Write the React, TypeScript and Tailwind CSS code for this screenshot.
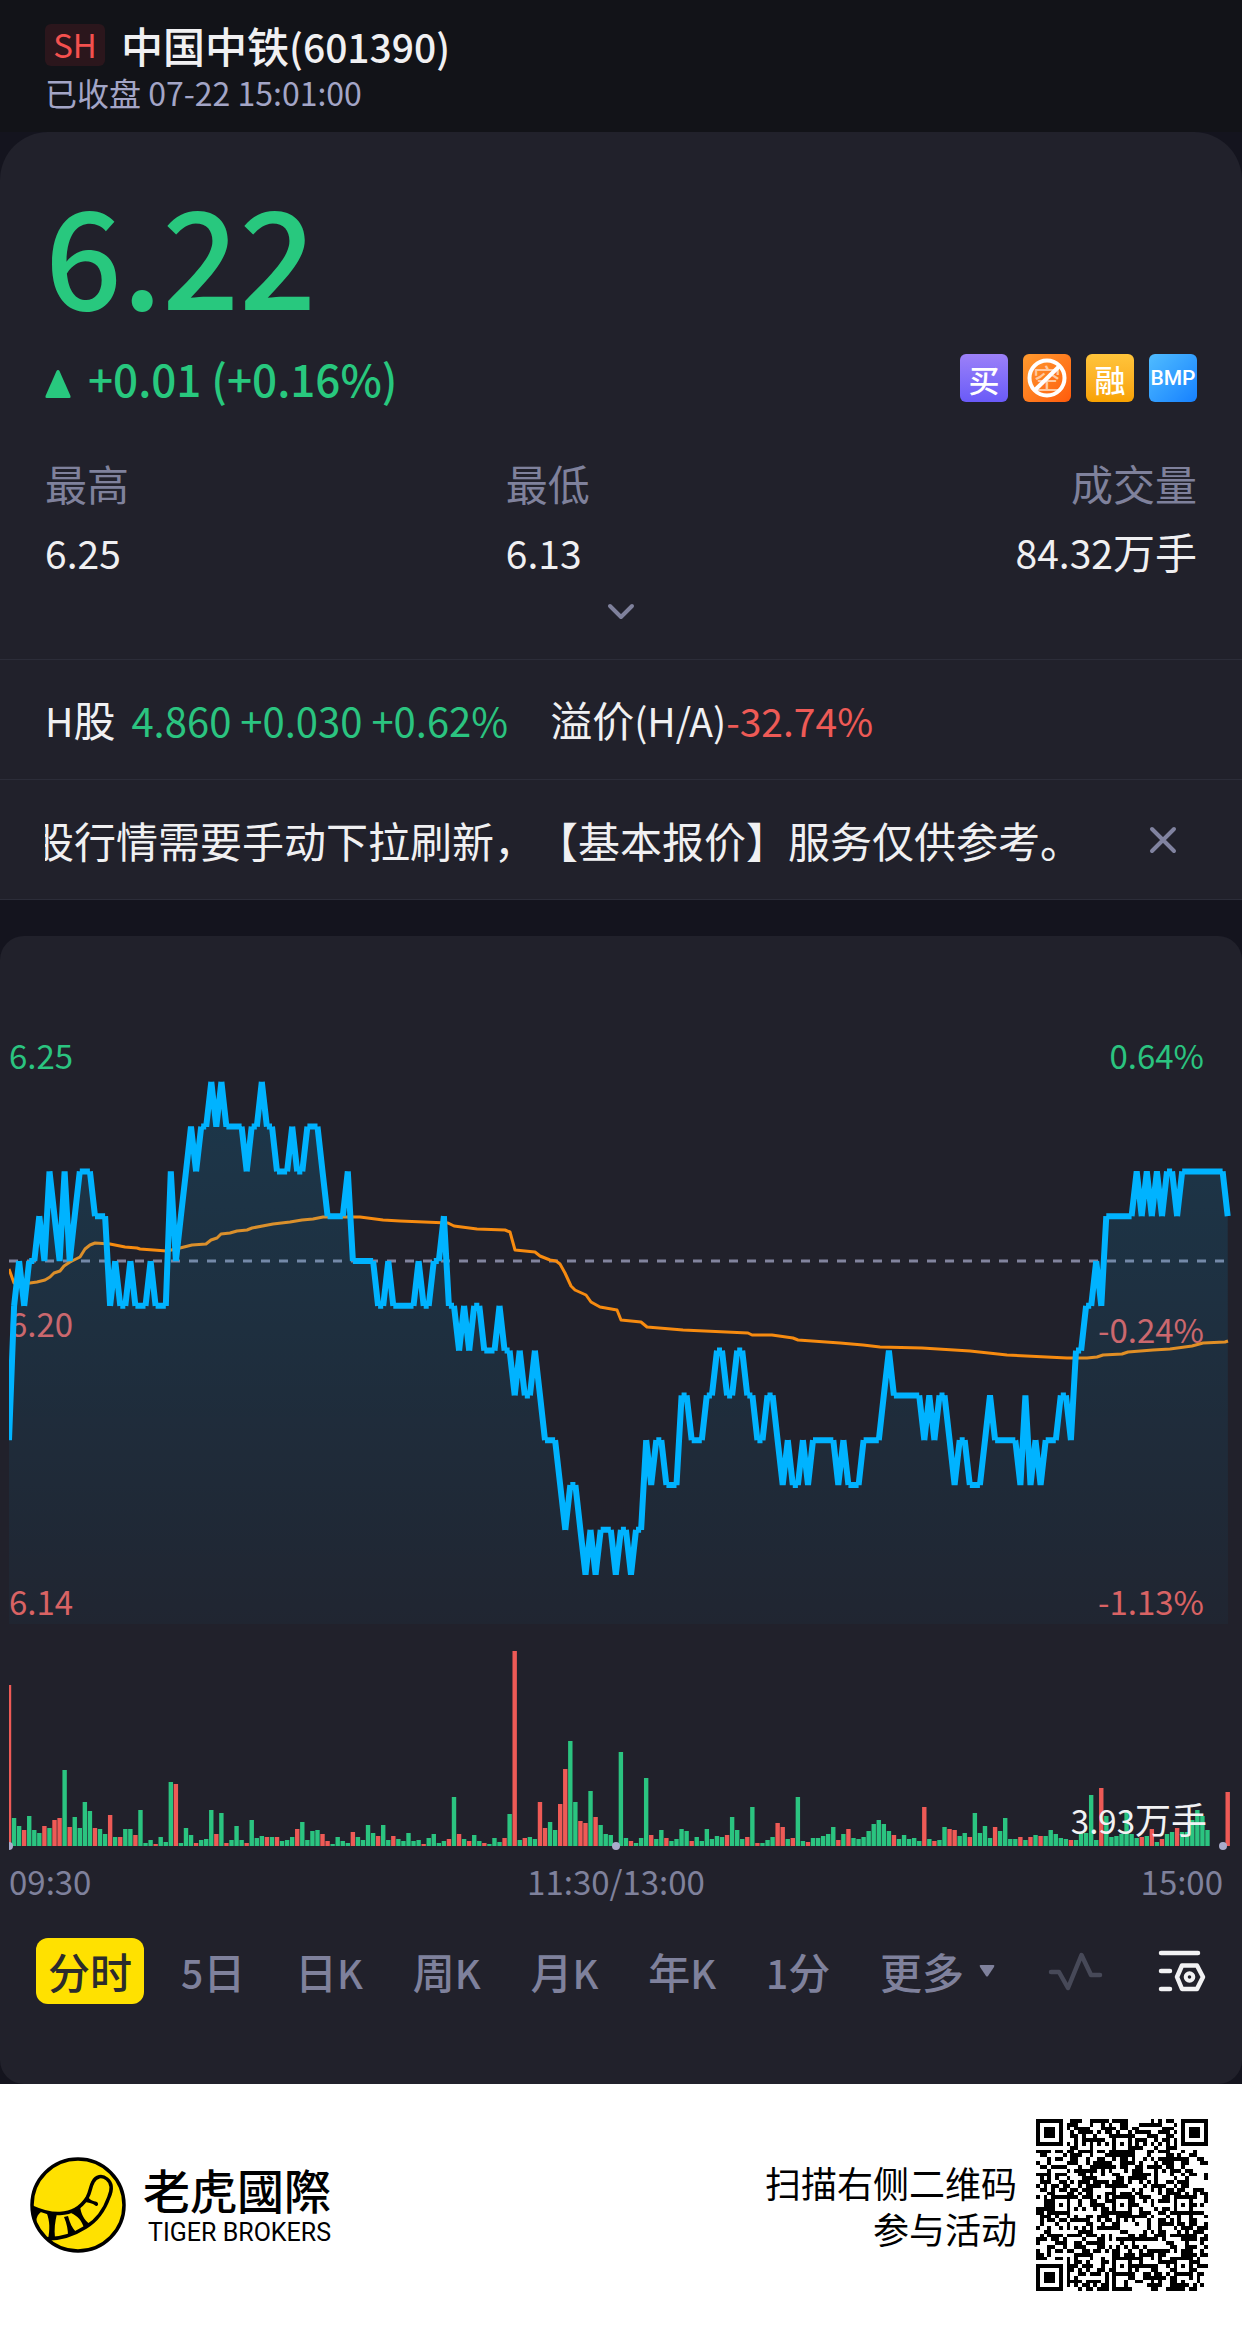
import React from "react";

const GREEN = "#2bc480";
const RED = "#ee5a56";

/* Ticks away from the previous close (one tick = 0.01), minute by minute. */
const TICKS = [
  -4, -1, 0, -1, 0, 0, 1, 0, 2, 1, 0, 2, 0, 1, 2, 2, 2, 1, 1, 1, -1, 0, -1, -1, 0, -1, -1, -1, 0, -1,
  -1, -1, 2, 0, 1, 2, 3, 2, 3, 3, 4, 3, 4, 3, 3, 3, 3, 2, 3, 3, 4, 3, 3, 2, 2, 2, 3, 2, 2, 3,
  3, 3, 2, 1, 1, 1, 1, 2, 0, 0, 0, 0, 0, -1, -1, 0, -1, -1, -1, -1, -1, 0, -1, -1, 0, 0, 1, -1, -1, -2,
  -1, -2, -1, -1, -2, -2, -2, -1, -2, -2, -3, -2, -3, -3, -2, -3, -4, -4, -4, -5, -6, -5, -5, -6, -7, -6, -7, -6, -6, -6,
  -7, -6, -6, -7, -6, -6, -4, -5, -4, -4, -5, -5, -5, -3, -3, -4, -4, -4, -3, -3, -2, -2, -3, -3, -2, -2, -3, -3, -4, -4,
  -3, -3, -4, -5, -4, -5, -5, -4, -5, -4, -4, -4, -4, -4, -5, -4, -5, -5, -5, -4, -4, -4, -4, -3, -2, -3, -3, -3, -3, -3,
  -3, -4, -3, -4, -3, -3, -4, -5, -4, -4, -5, -5, -5, -4, -3, -4, -4, -4, -4, -4, -5, -3, -5, -4, -5, -4, -4, -4, -3, -3,
  -4, -2, -2, -1, -1, 0, -1, 1, 1, 1, 1, 1, 1, 2, 1, 2, 1, 2, 1, 2, 2, 1, 2, 2, 2, 2, 2, 2, 2, 2,
  2, 1,
];

/* Running average price, in chart coordinates. */
const AVERAGE =
  "9,1269 14,1283 30,1283 37,1282 45,1280 50,1277 54,1273 60,1271 64,1266 70,1262 80,1257 85,1249 90,1245 95,1243 110,1244 125,1247 137,1248 140,1249 167,1251 180,1248 192,1245 206,1244 211,1240 217,1238 221,1234 230,1233 237,1231 247,1230 252,1228 273,1224 290,1222 302,1220 313,1219 323,1217 360,1217 383,1220 400,1221 448,1223 454,1226 477,1229 505,1230 510,1232 515,1250 535,1252 540,1256 550,1260 556,1261 560,1264 565,1273 571,1286 575,1290 586,1295 591,1302 600,1307 617,1310 621,1320 641,1322 647,1327 683,1330 748,1333 752,1335 772,1335 793,1338 798,1340 840,1343 863,1345 880,1347 922,1348 970,1351 1007,1355 1067,1358 1087,1358 1097,1357 1103,1355 1122,1354 1128,1352 1153,1350 1170,1349 1192,1346 1203,1343 1225,1342 1228,1341";

/* Volume bars: the number is the height, a negative one is a falling minute. */
const VOLUMES = [
  -161, 28, 20, -16, 30, 16, 13, -20, 18, -26, -28, 76, -19, 29, 18, 44, 35, -18, 17, 12, -31, 9, -9, 17, 17, -11, 36, 3, 6, -2,
  9, 4, 64, -62, 3, 18, 11, -3, 6, 7, 36, -12, 33, -3, 6, 20, 6, -3, 26, 8, 10, -9, 9, -9, 5, 6, 9, -17, 24, 6,
  15, 16, -12, -5, 2, 9, 5, 3, -14, 9, 6, 21, 13, -10, 21, 6, -10, 7, 5, 13, 5, 6, -2, 8, 12, 3, 5, -7, 49, -12,
  7, -5, 11, 5, -3, 2, 8, 4, -8, 32, -195, 6, -8, 9, 7, -44, -18, 24, 16, -42, -77, 105, 44, -25, -23, 55, -29, 21, 12, 11,
  2, 94, 8, -5, 3, 8, 68, -11, 7, 16, -8, 5, 7, 17, 15, -5, 9, 5, 17, 7, 10, 9, -11, 29, 16, 7, -9, 39, -3, 3,
  6, 9, -23, -19, 7, -8, 49, 5, -4, 8, 8, 10, 12, 19, -6, 12, -17, 8, 7, 9, 15, 22, 26, 22, 15, -11, 7, 11, 7, 8,
  5, -39, 7, -5, 6, 19, -17, -16, 10, 13, -9, 33, 13, 20, 8, -19, 15, 28, 7, 7, -9, 6, -9, 11, -10, 10, 16, 12, 8, 7,
  -6, 6, 13, 13, 51, 6, -58, 30, 9, 10, 12, 36, 12, 8, -9, 10, -17, 4, -7, 12, 14, -18, 14, 14, 26, 36, 30, 16, 0, 0,
  0, -54,
];

const STEP = 1218.7 / 241;
const xAt = (i: number) => 9 + i * STEP;
const yAt = (tick: number) => 1261 - tick * 44.8;
const BASE = 1846;

const segments = TICKS.slice(1)
  .map((t, i) => `M${xAt(i).toFixed(1)} ${yAt(TICKS[i]).toFixed(1)}L${xAt(i + 1).toFixed(1)} ${yAt(t).toFixed(1)}`)
  .join("");
const area =
  `M9 1624` + TICKS.map((t, i) => `L${xAt(i).toFixed(1)} ${yAt(t).toFixed(1)}`).join("") + `L1228 1624Z`;

function Num({ children }: { children: React.ReactNode }) {
  return <span className="text-[39px]">{children}</span>;
}

function PriceChart() {
  return (
    <div className="relative">
      <div className="text-[33px] leading-[38px]">
        <span className="absolute left-[9px] top-[100px] text-[#2bc480]">6.25</span>
        <span className="absolute left-[9px] top-[368px] text-[#e0605f]">6.20</span>
        <span className="absolute left-[9px] top-[646px] text-[#e0605f]">6.14</span>
        <span className="absolute right-[38px] top-[100px] text-[#2bc480]">0.64%</span>
        <span className="absolute right-[38px] top-[374px] text-[#e0605f]">-0.24%</span>
        <span className="absolute right-[38px] top-[646px] text-[#e0605f]">-1.13%</span>
      </div>
      <svg viewBox="0 936 1242 926" className="relative block w-full" role="img" aria-label="分时走势图">
        <defs>
          <linearGradient id="area" x1="0" y1="1081" x2="0" y2="1624" gradientUnits="userSpaceOnUse">
            <stop offset="0" stopColor="#00b4ff" stopOpacity="0.15" />
            <stop offset="1" stopColor="#00b4ff" stopOpacity="0.03" />
          </linearGradient>
          <clipPath id="plot">
            <rect x="9" y="936" width="1233" height="926" />
          </clipPath>
        </defs>
        <g clipPath="url(#plot)">
          <path d="M9 1261H1228" stroke="#82849e" strokeWidth="3" strokeDasharray="9 9" />
          <polyline points={AVERAGE} fill="none" stroke="#f78b10" strokeWidth="3" strokeLinejoin="round" />
          <path d={area} fill="url(#area)" />
          <path d={segments} fill="none" stroke="#00b3ff" strokeWidth="6" />
          {VOLUMES.map((v, i) => (
            <rect
              key={i}
              x={xAt(i) - 2.2}
              y={BASE - Math.abs(v)}
              width="4.4"
              height={Math.abs(v)}
              fill={v < 0 ? RED : GREEN}
            />
          ))}
          <circle cx="9" cy={BASE} r="4" fill="#a9abcb" />
          <circle cx="616" cy={BASE} r="4" fill="#a9abcb" />
          <circle cx="1223" cy={BASE} r="4" fill="#a9abcb" />
        </g>
      </svg>
      <span className="absolute bottom-[23px] right-[35px] text-[36px] leading-[38px] text-[#f2f2f4]">
        <span className="text-[33px]">3.93</span>万手
      </span>
    </div>
  );
}

function NoShortIcon() {
  return (
    <span
      role="img"
      aria-label="不可卖空"
      className="relative flex size-12 items-center justify-center rounded-md bg-linear-to-br from-[#ff9a2e] to-[#ff5a0a] text-[28px] leading-none text-[#ffc9a0]"
    >
      空
      <svg viewBox="0 0 48 48" className="absolute inset-0" fill="none" stroke="#fff" strokeWidth="4">
        <circle cx="24" cy="24" r="17.5" />
        <path d="M12 36 36.5 12" />
      </svg>
    </span>
  );
}

function TigerLogo() {
  return (
    <svg viewBox="0 0 96 96" className="size-24" aria-hidden="true">
      <circle cx="48" cy="48" r="46" fill="#ffe100" stroke="#000" strokeWidth="3.5" />
      <path
        d="M2 50C13 55 21 57 30 56.500C41 56 50 52 57 41C61 34 60 30 63 25C66 19 72 18 77 22C82 26 82 33 79 40C74 54 66 64 56 70C45 77 32 82 17 82"
        fill="none"
        stroke="#000"
        strokeWidth="3.5"
      />
      <path d="M2 49 11 55C7 58 6 62 6 68L2 58Z" />
      <path d="M16.500 55.500 27 56.500C25 65 24 72 25 81L18 82C20 73 20 64 16.500 55.500Z" />
      <path d="M34 60 38 59C40 66 42 71 46 75L38 79C38 73 37 67 34 60Z" />
      <path d="M41 56 50 49C51 57 54 63 60 67L54 71C52 64 48 59 41 56Z" />
      <path d="M53 45 57 39C60 43 63 44 67 45C69 47 68 49 66 49C62 46 58 45 53 45Z" />
    </svg>
  );
}

const QR_SIZE = 45;

function qrPath() {
  const finder = (x: number, y: number) => {
    const d = Math.max(Math.abs(x), Math.abs(y));
    return d === 3 || d <= 1;
  };
  let seed = 20240722;
  let d = "";
  for (let y = 0; y < QR_SIZE; y++) {
    for (let x = 0; x < QR_SIZE; x++) {
      seed = (Math.imul(seed, 1664525) + 1013904223) >>> 0;
      let on = ((seed >>> 16) & 1) === 1;
      if (x === 6 || y === 6) on = (x + y) % 2 === 0;
      for (const [cx, cy] of [[22, 6], [6, 22], [22, 22], [38, 22], [22, 38], [38, 38]]) {
        const r = Math.max(Math.abs(x - cx), Math.abs(y - cy));
        if (r <= 2) on = r !== 1;
      }
      for (const [cx, cy] of [[3, 3], [41, 3], [3, 41]]) {
        const r = Math.max(Math.abs(x - cx), Math.abs(y - cy));
        if (r <= 4) on = r < 4 && finder(x - cx, y - cy);
      }
      if (on) d += `M${x} ${y}h1v1h-1z`;
    }
  }
  return d;
}

const PERIODS: [string, string][] = [
  ["5", "日"],
  ["日", "K"],
  ["周", "K"],
  ["月", "K"],
  ["年", "K"],
  ["1", "分"],
];

export default function App() {
  return (
    <div className="overflow-hidden bg-[#14141e] font-['Noto_Sans_CJK_SC',sans-serif] text-[42px] text-[#f0f0f2] [text-spacing-trim:space-all]">
      <header className="bg-[#121318] px-[45px] pt-5 pb-[18px]">
        <h1 className="flex h-[50px] items-center gap-4 font-medium">
          <span className="flex h-[42px] w-[60px] items-center justify-center rounded-md bg-[#2b161c] text-[33px] font-normal text-[#f4504e]">
            SH
          </span>
          <span className="leading-[48px]">
            中国中铁<Num>(601390)</Num>
          </span>
        </h1>
        <p className="text-[32px] leading-[44px] text-[#a3a5c6]">已收盘 07-22 15:01:00</p>
      </header>

      <section className="rounded-t-[48px] bg-[#21212b]">
        <div className="px-[45px] pt-[50px]">
          <p className="text-[135px] leading-[138px] font-medium text-[#28c87e]">6.22</p>
          <div className="mt-[34px] flex h-12 items-center justify-between">
            <p className="flex items-center gap-[17px] text-[44px] leading-[48px] font-medium text-[#28c87e]">
              <svg viewBox="0 0 26 28" className="mt-3 h-7 w-[26px]" fill="currentColor" aria-hidden="true">
                <path d="M13 0Q14 0 14.500 1L25.500 26Q26 28 24.500 28H1.500Q0 28 .5 26L11.500 1Q12 0 13 0Z" />
              </svg>
              +0.01 (+0.16%)
            </p>
            <div className="flex gap-[15px]">
              <span className="flex size-12 items-center justify-center rounded-md bg-linear-to-b from-[#9c80f8] to-[#6a5af8] text-[31px] leading-none font-medium text-white">
                买
              </span>
              <NoShortIcon />
              <span className="flex size-12 items-center justify-center rounded-md bg-linear-to-b from-[#ffc43a] to-[#f8a200] text-[31px] leading-none font-medium text-white">
                融
              </span>
              <span className="flex size-12 items-center justify-center rounded-md bg-linear-to-br from-[#50bcff] to-[#1680ff] font-['Roboto',sans-serif] text-[21px] leading-none font-medium text-white">
                BMP
              </span>
            </div>
          </div>
          <dl className="mt-[51px] grid grid-cols-[2fr_1.500fr_1.500fr] leading-[60px]">
            <div>
              <dt className="text-[#7f819c]">最高</dt>
              <dd className="mt-2 h-[60px]"><Num>6.25</Num></dd>
            </div>
            <div>
              <dt className="text-[#7f819c]">最低</dt>
              <dd className="mt-2 h-[60px]"><Num>6.13</Num></dd>
            </div>
            <div className="text-right">
              <dt className="text-[#7f819c]">成交量</dt>
              <dd className="mt-2 h-[60px]"><Num>84.32</Num>万手</dd>
            </div>
          </dl>
        </div>
        <div className="flex h-[79px] justify-center border-b border-[#2c2d39] pt-[21px]">
          <button type="button" aria-label="展开" className="h-5 w-8 text-[#7f819c]">
            <svg viewBox="0 0 32 20" fill="none" stroke="currentColor" strokeWidth="4" strokeLinecap="round" strokeLinejoin="round">
              <path d="M5 4 16 15 27 4" />
            </svg>
          </button>
        </div>

        <div className="flex h-[120px] items-center border-b border-[#2c2d39] px-[45px] leading-[60px] whitespace-pre">
          <span><Num>H</Num>股</span>
          <span className="ml-4 text-[40px] text-[#2bc480]">4.860 +0.030 +0.62%</span>
          <span className="ml-[42px]">溢价<Num>(H/A)</Num></span>
          <span className="text-[#ee5a56]"><Num>-32.74%</Num></span>
        </div>

        <div className="flex h-[120px] items-center justify-between border-b border-[#2c2d39] pr-[61px] pl-[45px] leading-[60px]">
          <div className="overflow-hidden whitespace-nowrap">
            <p className="-ml-[13px]">股行情需要手动下拉刷新，【基本报价】服务仅供参考。</p>
          </div>
          <button type="button" aria-label="关闭" className="size-9 shrink-0 text-[#8183a0]">
            <svg viewBox="0 0 36 36" fill="none" stroke="currentColor" strokeWidth="4" strokeLinecap="round">
              <path d="M7 7 29 29M29 7 7 29" />
            </svg>
          </button>
        </div>
      </section>

      <section className="mt-9 rounded-3xl bg-[#21212b] pb-20">
        <PriceChart />
        <div className="flex justify-between pr-[19px] pl-[9px] text-[33px] leading-[38px] text-[#7f819c]">
          <span>09:30</span>
          <span>11:30/13:00</span>
          <span>15:00</span>
        </div>
        <nav className="mt-[38px] flex h-[66px] items-center pr-[35px] pl-9 leading-[66px] font-medium text-[#7f819c]">
          <button type="button" className="rounded-xl bg-[#ffe100] px-3 text-[#2c2c2c]">分时</button>
          <div className="ml-[37px] flex flex-1 justify-between">
            {PERIODS.map(([a, b]) => (
              <button type="button" key={a + b} className="h-[66px]">
                {a === "5" || a === "1" ? <Num>{a}</Num> : a}
                {b === "K" ? <Num>{b}</Num> : b}
              </button>
            ))}
            <button type="button" className="flex h-[66px] items-center gap-[15px]">
              更多
              <svg viewBox="0 0 16 12" className="h-3 w-4" fill="currentColor" aria-hidden="true">
                <path d="M1.500 0H14.500Q16 0 15 2L9 11Q8 12 7 11L1 2Q0 0 1.500 0Z" />
              </svg>
            </button>
          </div>
          <button type="button" aria-label="指标" className="ml-[52px] h-10 w-14 text-[#474958]">
            <svg viewBox="0 0 56 40" fill="none" stroke="currentColor" strokeWidth="4.5" strokeLinecap="round" strokeLinejoin="round">
              <path d="M4 21H12L21 37 34.500 4 44 24H53" />
            </svg>
          </button>
          <button type="button" aria-label="图表设置" className="ml-[54px] h-12 w-[50px] text-[#f2f2f4]">
            <svg viewBox="0 0 50 48" fill="none" stroke="currentColor" strokeWidth="4.5" strokeLinecap="round" strokeLinejoin="round">
              <path d="M4 6H41M4 24H13M4 42H13" />
              <path d="M25 18.500H40L46 30 40 42H25L20 30Z" />
              <circle cx="32.5" cy="30" r="3.8" strokeWidth="4" />
            </svg>
          </button>
        </nav>
      </section>

      <footer className="flex items-center justify-between bg-white pt-[35px] pb-[34px] pr-[34px] pl-[30px] text-black">
        <div className="flex items-center gap-[17px]">
          <TigerLogo />
          <div>
            <p className="font-['Noto_Sans_CJK_TC',sans-serif] text-[47px] leading-[52px] font-medium">老虎國際</p>
            <p className="mt-1 text-right font-['Roboto',sans-serif] text-[25px] leading-[28px]">TIGER BROKERS</p>
          </div>
        </div>
        <div className="flex items-center gap-[19px]">
          <p className="text-right text-[36px] leading-[46px]">
            扫描右侧二维码
            <br />
            参与活动
          </p>
          <svg viewBox="0 0 45 45" className="size-[172px]" shapeRendering="crispEdges" role="img" aria-label="二维码">
            <path d={qrPath()} />
          </svg>
        </div>
      </footer>
    </div>
  );
}
